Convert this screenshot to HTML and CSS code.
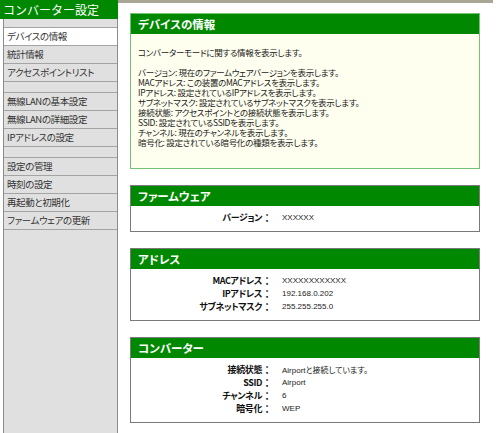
FILE: index.html
```html
<!DOCTYPE html>
<html lang="ja">
<head>
<meta charset="utf-8">
<title>コンバーター設定</title>
<link rel="stylesheet" href="styles.css">
</head>
<body>
<div class="page">
  <nav class="sidebar">
    <div class="side-head">コンバーター設定</div>
    <div class="side-list">
      <div class="spacer"></div>
      <div class="item active">デバイスの情報</div>
      <div class="item">統計情報</div>
      <div class="item">アクセスポイントリスト</div>
      <div class="spacer gap"></div>
      <div class="item">無線LANの基本設定</div>
      <div class="item">無線LANの詳細設定</div>
      <div class="item">IPアドレスの設定</div>
      <div class="spacer gap"></div>
      <div class="item">設定の管理</div>
      <div class="item">時刻の設定</div>
      <div class="item">再起動と初期化</div>
      <div class="item">ファームウェアの更新</div>
    </div>
  </nav>
  <main class="main">
    <section class="panel info">
      <h2 class="panel-head">デバイスの情報</h2>
      <div class="panel-body desc">
        <p class="lead">コンバーターモードに関する情報を表示します。</p>
        <p>バージョン: 現在のファームウェアバージョンを表示します。</p>
        <p>MACアドレス: この装置のMACアドレスを表示します。</p>
        <p>IPアドレス: 設定されているIPアドレスを表示します。</p>
        <p>サブネットマスク: 設定されているサブネットマスクを表示します。</p>
        <p>接続状態: アクセスポイントとの接続状態を表示します。</p>
        <p>SSID: 設定されているSSIDを表示します。</p>
        <p>チャンネル: 現在のチャンネルを表示します。</p>
        <p>暗号化: 設定されている暗号化の種類を表示します。</p>
      </div>
    </section>

    <section class="panel data">
      <h2 class="panel-head">ファームウェア</h2>
      <div class="panel-body rows">
        <div class="row"><span class="label">バージョン</span><span class="colon">：</span><span class="value">XXXXXX</span></div>
      </div>
    </section>

    <section class="panel data">
      <h2 class="panel-head">アドレス</h2>
      <div class="panel-body rows">
        <div class="row"><span class="label">MACアドレス</span><span class="colon">：</span><span class="value">XXXXXXXXXXXX</span></div>
        <div class="row"><span class="label">IPアドレス</span><span class="colon">：</span><span class="value">192.168.0.202</span></div>
        <div class="row"><span class="label">サブネットマスク</span><span class="colon">：</span><span class="value">255.255.255.0</span></div>
      </div>
    </section>

    <section class="panel data">
      <h2 class="panel-head">コンバーター</h2>
      <div class="panel-body rows">
        <div class="row"><span class="label">接続状態</span><span class="colon">：</span><span class="value">Airportと接続しています。</span></div>
        <div class="row"><span class="label">SSID</span><span class="colon">：</span><span class="value">Airport</span></div>
        <div class="row"><span class="label">チャンネル</span><span class="colon">：</span><span class="value">6</span></div>
        <div class="row"><span class="label">暗号化</span><span class="colon">：</span><span class="value">WEP</span></div>
      </div>
    </section>
  </main>
</div>
</body>
</html>
```
FILE: styles.css
```css
* { box-sizing: border-box; }

html, body {
  margin: 0;
  padding: 0;
  background: #ffffff;
}

body {
  font-family: "Noto Sans CJK JP", "Liberation Sans", sans-serif;
  color: #222;
}

.page {
  display: flex;
  height: 433px;
  overflow: hidden;
}

/* Sidebar */
.sidebar {
  flex: 0 0 118px;
  display: flex;
  flex-direction: column;
}

.side-head {
  height: 19px;
  background: #008800;
  color: #ffffff;
  font-size: 12px;
  line-height: 19px;
  padding-left: 3px;
  white-space: nowrap;
}

.side-list {
  flex: 1;
  margin-left: 3px;
  border-left: 1px solid #8c8c8c;
  border-right: 1px solid #8c8c8c;
  background: #e0e0e0;
  display: flex;
  flex-direction: column;
}

.spacer {
  height: 9px;
  border-bottom: 1px solid #a4a4a4;
}

.spacer.gap {
  height: 11px;
}

.item {
  height: 18px;
  border-bottom: 1px solid #a4a4a4;
  padding-left: 3px;
  font-size: 9.5px;
  letter-spacing: -0.4px;
  line-height: 17px;
  color: #333;
  white-space: nowrap;
  font-feature-settings: "palt";
}

.item.active {
  background: #ffffff;
}

/* Main */
.main {
  flex: 0 0 375px;
  border-top: 3px solid #a9a696;
  padding: 10px 0 0 12px;
}

.panel {
  width: 350px;
  margin-bottom: 16px;
}

.panel.info {
  border: 1px solid #74c274;
}

.panel.data {
  border: 1px solid #7a7a7a;
}

.panel-head {
  margin: 0;
  height: 20px;
  background: #008800;
  color: #ffffff;
  font-size: 11.5px;
  font-weight: bold;
  line-height: 20px;
  padding-left: 7px;
  font-feature-settings: "palt";
}

.panel-body {
  background: #ffffff;
}

.panel-body.desc {
  background: #fffff0;
  padding: 13px 0 21px 7px;
  font-size: 8.5px;
  letter-spacing: -0.3px;
  line-height: 10px;
  font-feature-settings: "palt";
  color: #1a1a1a;
}

.desc p {
  margin: 0;
  white-space: nowrap;
}

.desc p.lead {
  margin-bottom: 10px;
}

.panel-body.rows {
  padding: 4px 0 8px 0;
}

.row {
  display: grid;
  grid-template-columns: 131px 20px 1fr;
  height: 13px;
  align-items: center;
}

.label {
  text-align: right;
  font-size: 9px;
  letter-spacing: -0.4px;
  font-weight: bold;
  color: #111;
  font-feature-settings: "palt";
  white-space: nowrap;
}

.colon {
  font-size: 10px;
  font-weight: bold;
  color: #111;
}

.value {
  font-family: "Liberation Sans", "Noto Sans CJK JP", sans-serif;
  font-size: 8px;
  color: #222;
  white-space: nowrap;
  font-feature-settings: "palt";
}
```
